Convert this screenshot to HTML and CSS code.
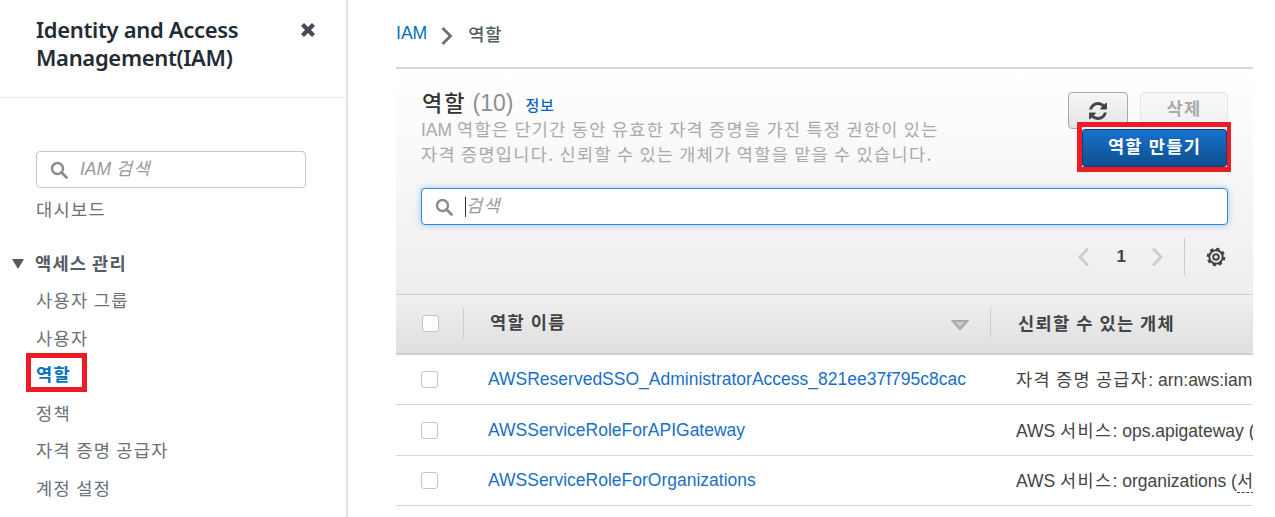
FILE: index.html
```html
<!DOCTYPE html>
<html lang="ko">
<head>
<meta charset="utf-8">
<title>IAM 역할</title>
<link rel="stylesheet" href="styles.css">
</head>
<body>
<div class="page">
  <aside class="sidebar">
    <div class="side-head">
      <h2 class="side-title">Identity and Access Management(IAM)</h2>
      <svg class="close" viewBox="0 0 16 16" width="16" height="16"><path d="M1 4l3-3 4 4 4-4 3 3-4 4 4 4-3 3-4-4-4 4-3-3 4-4z" fill="#444b54"/></svg>
    </div>
    <div class="side-body">
      <div class="side-search">
        <svg class="mag" viewBox="0 0 18 18" width="18" height="18"><circle cx="7.500" cy="7.500" r="5.500" fill="none" stroke="#8a8a8a" stroke-width="2.400"/><path d="M11.500 11.500l5 5" stroke="#8a8a8a" stroke-width="2.800" stroke-linecap="round"/></svg>
        <span class="ph">IAM <span class="ko">검색</span></span>
      </div>
      <a class="nav">대시보드</a>
      <div class="nav-group"><span class="tri"></span>액세스 관리</div>
      <a class="nav">사용자 그룹</a>
      <a class="nav">사용자</a>
      <a class="nav nav-active"><span class="red-box">역할</span></a>
      <a class="nav">정책</a>
      <a class="nav">자격 증명 공급자</a>
      <a class="nav">계정 설정</a>
    </div>
  </aside>
  <main class="main">
    <nav class="crumbs">
      <a class="crumb-link">IAM</a>
      <svg class="crumb-sep" viewBox="0 0 12 18" width="12" height="18"><path d="M1.500 1l8 8-8 8" fill="none" stroke="#687078" stroke-width="2.800"/></svg>
      <span class="crumb-cur">역할</span>
    </nav>
    <section class="panel">
      <div class="panel-top">
        <div class="panel-text">
          <div class="title-line"><span class="title">역할</span><span class="count">(10)</span><a class="info">정보</a></div>
          <p class="desc">IAM <span class="ko">역할은 단기간 동안 유효한 자격 증명을 가진 특정 권한이 있는</span><br><span class="ko">자격 증명입니다. 신뢰할 수 있는 개체가 역할을 맡을 수 있습니다.</span></p>
        </div>
        <div class="actions">
          <div class="action-row">
            <button class="btn btn-icon"><svg viewBox="128 128 1536 1536" width="18" height="18"><path d="M1639 1056q0 5-1 7-64 268-268 434.500t-478 166.500q-146 0-282.500-55t-243.500-157l-129 129q-19 19-45 19t-45-19-19-45v-448q0-26 19-45t45-19h448q26 0 45 19t19 45-19 45l-137 137q71 66 161 102t187 36q134 0 250-65t186-179q11-17 53-117 8-23 30-23h192q13 0 22.500 9.500t9.500 22.500zm25-800v448q0 26-19 45t-45 19h-448q-26 0-45-19t-19-45 19-45l138-138q-148-137-349-137-134 0-250 65t-186 179q-11 17-53 117-8 23-30 23h-199q-13 0-22.500-9.500t-9.500-22.500v-7q65-268 270-434.500t480-166.500q146 0 284 55.500t245 156.500l130-129q19-19 45-19t45 19 19 45z" fill="#444"/></svg></button>
            <button class="btn btn-off">삭제</button>
          </div>
          <div class="red-frame"><button class="btn-primary">역할 만들기</button></div>
        </div>
      </div>
      <div class="search">
        <svg class="mag" viewBox="0 0 18 18" width="18" height="18"><circle cx="7.500" cy="7.500" r="5.500" fill="none" stroke="#8a8a8a" stroke-width="2.400"/><path d="M11.500 11.500l5 5" stroke="#8a8a8a" stroke-width="2.800" stroke-linecap="round"/></svg>
        <span class="caret"></span><span class="ph ko">검색</span>
      </div>
      <div class="pager">
        <svg viewBox="0 0 12 20" width="12" height="20"><path d="M11 1.500L3 10l8 8.500" fill="none" stroke="#ccc" stroke-width="2.800"/></svg>
        <span class="page-num">1</span>
        <svg viewBox="0 0 12 20" width="12" height="20"><path d="M1 1.500L9 10l-8 8.500" fill="none" stroke="#ccc" stroke-width="2.800"/></svg>
        <span class="pager-sep"></span>
        <svg class="gear" viewBox="0 0 20 20" width="20" height="20"><circle cx="10" cy="10" r="6.700" fill="none" stroke="#444" stroke-width="2"/><circle cx="10" cy="10" r="8" fill="none" stroke="#444" stroke-width="2.600" stroke-dasharray="3.200 3.080"/><circle cx="10" cy="10" r="2.800" fill="none" stroke="#444" stroke-width="2"/></svg>
      </div>
    </section>
    <div class="table">
      <div class="row head">
        <div class="cell-check"><span class="check check-head"></span></div>
        <div class="cell-name head-name"><span class="head-label">역할 이름</span><svg class="sort" viewBox="0 0 18 10" width="18" height="10"><path d="M1.500 1h15L9 9z" fill="#c9c9c9" stroke="#a8a8a8" stroke-width="2"/></svg></div>
        <div class="cell-trust head-trust"><span class="head-label">신뢰할 수 있는 개체</span></div>
      </div>
      <div class="row">
        <div class="cell-check"><span class="check"></span></div>
        <div class="cell-name"><a class="role">AWSReservedSSO_AdministratorAccess_821ee37f795c8cac</a></div>
        <div class="cell-trust"><span class="ko">자격 증명 공급자</span>: arn:aws:iam</div>
      </div>
      <div class="row">
        <div class="cell-check"><span class="check"></span></div>
        <div class="cell-name"><a class="role">AWSServiceRoleForAPIGateway</a></div>
        <div class="cell-trust">AWS <span class="ko">서비스</span>: ops.apigateway (</div>
      </div>
      <div class="row">
        <div class="cell-check"><span class="check"></span></div>
        <div class="cell-name"><a class="role">AWSServiceRoleForOrganizations</a></div>
        <div class="cell-trust">AWS <span class="ko">서비스</span>: organizations (<span class="ko dashed">서</span></div>
      </div>
    </div>
  </main>
</div>
</body>
</html>
```

FILE: styles.css
```css
* { box-sizing: border-box; }
html, body { margin: 0; height: 100%; overflow: hidden; background: #fff; }
body { font-family: "Liberation Sans", "Noto Sans CJK KR", sans-serif; font-size: 17.500px; color: #444; }
.page { display: flex; height: 517px; }
.ko { font-family: "Noto Sans CJK KR", sans-serif; letter-spacing: 1.350px; word-spacing: -1.200px; }

.sidebar { width: 348px; flex: none; border-right: 2px solid #e3e4e5; }
.side-head { height: 98px; padding: 15px 28px 0 36px; display: flex; justify-content: space-between; align-items: flex-start; border-bottom: 1px solid #eaeded; }
.side-title { margin: 0; width: 230px; font: 600 22px/28px "Noto Sans", "Noto Sans CJK KR", sans-serif; color: #232b35; letter-spacing: -0.330px; }
.close { margin-top: 7px; margin-right: 2px; }
.side-body { padding: 53px 0 0 36px; }
.side-search { width: 270px; height: 37px; border: 1px solid #c6c6c6; border-radius: 4px; display: flex; align-items: center; padding-left: 13px; gap: 12px; }
.ph { font-style: italic; color: #999; font-size: 17.500px; line-height: 24px; }
.side-search .ph { margin-top: -3px; }
.nav { display: block; height: 37.500px; line-height: 35px; font-family: "Noto Sans CJK KR", sans-serif; font-size: 17.600px; letter-spacing: 1.350px; word-spacing: -1.200px; color: #6b7078; }
.side-search + .nav { margin-top: 3px; height: 37px; }
.nav-group { margin: 15px 0 0 -24px; height: 39px; line-height: 33px; font-family: "Noto Sans CJK KR", sans-serif; font-weight: 700; color: #545b64; display: flex; align-items: center; gap: 11px; font-size: 17.600px; letter-spacing: 1.200px; word-spacing: -1.200px; }
.tri { width: 0; height: 0; border-left: 6px solid transparent; border-right: 6px solid transparent; border-top: 10px solid #545b64; margin-top: 2px; }
.nav-active { display: flow-root; font-weight: 700; color: #0073bb; }
.red-box { display: block; margin: -4px 0 0 -10px; padding: 0 5px; height: 39px; line-height: 31px; border: 5px solid #ed1c24; width: 61px; letter-spacing: 1.200px; }

.main { flex: none; width: 857px; margin-left: 48px; overflow: hidden; }
.crumbs { height: 67px; display: flex; align-items: center; }
.crumb-link { color: #0073bb; font-size: 17.600px; }
.crumb-sep { margin: 4px 15px 0 14px; }
.crumb-cur { font-family: "Noto Sans CJK KR", sans-serif; color: #545b64; font-weight: 500; font-size: 17.600px; letter-spacing: 0.800px; }

.panel { height: 228px; border-top: 2px solid #d5d8d8; background: linear-gradient(#fff, #eee); padding: 23px 25px 0; border-bottom: 1px solid #cfcfcf; }
.panel-top { display: flex; justify-content: space-between; height: 96px; }
.title-line { display: flex; align-items: baseline; height: 25px; margin: -3px 0 0 1px; }
.title { font: 500 22px/25px "Noto Sans CJK KR", sans-serif; color: #333; letter-spacing: 2px; }
.count { font-size: 23px; color: #8f8f8f; margin-left: 6px; }
.info { font: 500 15px "Noto Sans CJK KR", sans-serif; color: #1166bb; margin-left: 12px; letter-spacing: 0.800px; }
.desc { margin: 3px 0 0; font: 17.500px/24px "Liberation Sans", "Noto Sans CJK KR", sans-serif; color: #aaa; }
.actions { display: flex; flex-direction: column; align-items: flex-end; width: 160px; }
.action-row { display: flex; gap: 12px; }
.btn { height: 37px; border-radius: 4px; padding: 0; display: flex; align-items: center; justify-content: center; font: 700 17.600px "Noto Sans CJK KR", sans-serif; letter-spacing: 1.200px; }
.btn-icon { width: 60px; border: 1px solid #aaa; background: linear-gradient(#f7f7f7, #e3e3e3); }
.btn-off { width: 88px; border: 1px solid #e3e3e3; background: linear-gradient(#f8f8f8, #f0f0f0); color: #aaa; padding-bottom: 7px; }
.red-frame { width: 154px; height: 50px; margin: -7px -3px 0 0; border: 5px solid #ed1c24; border-right-width: 4px; background: #eee; }
.btn-primary { display: block; width: 100%; height: 38px; margin-top: 2px; border: 1px solid #0d4379; border-radius: 3px; padding: 0 0 6px; background: linear-gradient(#1772cc, #0f4f8f); color: #fff; font: 700 17.600px "Noto Sans CJK KR", sans-serif; letter-spacing: 1.200px; }

.search { height: 37px; border: 1px solid #2e87e0; border-radius: 4px; background: #fff; box-shadow: 0 0 6px rgba(46, 135, 224, .45); display: flex; align-items: center; padding-left: 13px; }
.search .mag { margin-right: 12px; }
.search .ph { margin-top: -3px; }
.caret { width: 1px; height: 20px; background: #333; }
.pager { height: 37px; margin-top: 13px; display: flex; align-items: center; justify-content: flex-end; }
.page-num { font: 700 17px "Liberation Sans", sans-serif; color: #444; margin: 0 26px 0 28px; }
.pager-sep { width: 1px; height: 37px; background: #ccc; margin: 0 21px 0 20px; }
.gear { margin-right: 2px; }

.table { width: 857px; overflow: hidden; }
.row { display: flex; height: 50.400px; align-items: center; border-bottom: 1px solid #d5d8d8; white-space: nowrap; }
.head { height: 60px; background: linear-gradient(#f0f0f0, #dfdfdf); border-bottom: 2px solid #d0d0d0; }
.head-label { font: 700 17.600px "Noto Sans CJK KR", sans-serif; letter-spacing: 1.300px; word-spacing: -0.500px; color: #444; display: block; margin-top: -3px; }
.cell-check { width: 92px; flex: none; padding-left: 25px; display: flex; align-items: center; }
.check { display: block; width: 17px; height: 17px; border: 1px solid #c4c4c4; border-radius: 3px; background: #fff; }
.check-head { margin: -2px 0 0 1px; }
.cell-name { width: 528px; flex: none; }
.cell-trust { color: #444; margin-top: -2px; }
.role { color: #1a6fc4; }
.head .cell-name { height: 30px; display: flex; justify-content: space-between; align-items: center; padding: 0 21px 0 26px; margin: -3px 0 0 -25px; width: 528px; border-left: 1px solid #ccc; border-right: 1px solid #ccc; }
.head-trust { padding-left: 27px; margin-top: 0; }
.sort { margin-top: 4px; }
.dashed { border-bottom: 1px dashed #444; }
```
